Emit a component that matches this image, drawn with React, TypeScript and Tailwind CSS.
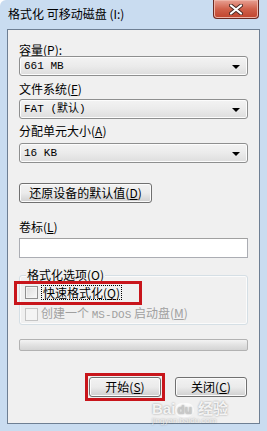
import React from 'react'

const cjk = { fontFamily: '"Noto Sans CJK SC", "Liberation Sans", sans-serif' }
const mono = { fontFamily: '"Liberation Mono", "Noto Sans CJK SC", monospace' }

function Key({ k }: { k: string }) {
  return (
    <span>
      (<span className="underline underline-offset-1">{k}</span>)
    </span>
  )
}

function Select({ value }: { value: React.ReactNode }) {
  return (
    <div className="h-[20px] flex items-center justify-between rounded-[3px] border border-[#8e8f8f] bg-gradient-to-b from-[#f3f3f3] via-[#ebebeb] to-[#dddddd] pl-[4px] pr-[7px] text-[11px] text-black shadow-[inset_0_0_0_1px_#fcfcfc]">
      <span style={mono}>{value}</span>
      <span className="w-0 h-0 border-l-[4px] border-r-[4px] border-t-[4px] border-l-transparent border-r-transparent border-t-black mt-[2px]" />
    </div>
  )
}

function Button({ children, className = '' }: { children: React.ReactNode; className?: string }) {
  return (
    <div
      className={`h-[20px] flex items-center justify-center rounded-[3px] border border-[#707070] bg-gradient-to-b from-[#f2f2f2] via-[#ebebeb] to-[#cfcfcf] text-[12px] text-black shadow-[inset_0_0_0_1px_#fbfbfb] ${className}`}
    >
      {children}
    </div>
  )
}

export default function App() {
  return (
    <div className="w-[267px] h-[431px] bg-[#c9dcf0] flex flex-col relative overflow-hidden rounded-tl-[6px]" style={cjk}>
      {/* title bar */}
      <div className="h-[29px] flex items-start justify-between shrink-0">
        <div className="pl-[8px] pt-[7px] text-[12px] leading-[14px] text-black">
          格式化 可移动磁盘 (I:)
        </div>
        <div className="mr-[8px] w-[46px] h-[19px] rounded-b-[4px] border border-t-0 border-[#6b2a22] bg-gradient-to-b from-[#e7a093] via-[#d0614b] to-[#c0432c] flex items-center justify-center shadow-[inset_0_0_0_1px_#eeb3a6]">
          <svg width="14" height="11" viewBox="0 0 14 11">
            <path d="M2 1.5 L12 9.5 M12 1.5 L2 9.5" stroke="#4a2a24" strokeWidth="4" strokeLinecap="round" />
            <path d="M2 1.5 L12 9.5 M12 1.5 L2 9.5" stroke="#ffffff" strokeWidth="2.2" strokeLinecap="round" />
          </svg>
        </div>
      </div>

      {/* client area */}
      <div className="mx-[7px] mb-[7px] flex-1 border border-[#6e7f93] bg-[#f0f0f0] px-[11px] text-[12px] leading-[14px] text-black flex flex-col">
        <div className="mt-[13px]">
          容量<Key k="P" />:
        </div>
        <div className="mt-[-1px]">
          <Select value="661 MB" />
        </div>

        <div className="mt-[6px]">
          文件系统<Key k="F" />
        </div>
        <div className="mt-[3px]">
          <Select value="FAT (默认)" />
        </div>

        <div className="mt-[5px]">
          分配单元大小<Key k="A" />
        </div>
        <div className="mt-[5px]">
          <Select value="16 KB" />
        </div>

        <Button className="mt-[20px] w-[133px] self-start">
          还原设备的默认值<Key k="D" />
        </Button>

        <div className="mt-[17px]">
          卷标<Key k="L" />
        </div>
        <div className="mt-[4px] h-[20px] border border-[#abadb3] border-t-[#a0a0a0] bg-white" />

        {/* group box */}
        <div className="mt-[17px] relative h-[50px] border border-[#d5dfe5] rounded-[3px] shadow-[inset_0_0_0_1px_#fbfbfb]">
          <div className="absolute left-[6px] top-[-8px] bg-[#f0f0f0] px-[1px]">
            格式化选项<Key k="O" />
          </div>
          <div className="mt-[9px] ml-[5px] flex items-center gap-[3px]">
            <span className="w-[13px] h-[13px] border border-[#8f8f8f] bg-gradient-to-br from-[#dcdcdc] to-[#f8f8f8] shadow-[inset_0_0_0_1px_#f4f4f4]" />
            <span className="border border-dotted border-black px-[1px] leading-[13px]">
              快速格式化<Key k="Q" />
            </span>
          </div>
          <div className="mt-[6px] ml-[5px] flex items-center gap-[3px] text-[#a0a0a0]">
            <span className="w-[13px] h-[13px] border border-[#c4c4c4] bg-[#f4f4f4]" />
            <span>
              创建一个 <span style={mono} className="text-[11px]">MS-DOS</span> 启动盘<Key k="M" />
            </span>
          </div>
          {/* red highlight */}
          <div className="absolute left-[-6px] top-[5px] w-[128px] h-[24px] border-[3px] border-[#c8151b]" />
        </div>

        <div className="mt-[14px] h-[12px] rounded-[2px] border border-[#b2b2b2] bg-gradient-to-b from-[#f3f3f3] via-[#e2e2e2] to-[#d4d4d4]" />

        <div className="mt-[26px] flex justify-end gap-[10px] pr-[1px]">
          <div className="border-[3px] border-[#c8151b] p-[1px] -my-[4px]">
            <Button className="w-[72px] h-[17px] border-[#3c7fb1] from-[#eaf6fd] via-[#bee6fd] to-[#a7d9f5] shadow-[inset_0_0_0_1px_#c6e9fc]">
              开始<Key k="S" />
            </Button>
          </div>
          <Button className="w-[72px] h-[19px]">
            关闭<Key k="C" />
          </Button>
        </div>
      </div>

      {/* watermark */}
      <div className="absolute left-[152px] top-[400px] text-white/85 leading-none [text-shadow:0_0_2px_rgba(0,0,0,0.4)] pointer-events-none">
        <div className="text-[15px] font-bold" style={{ fontFamily: '"Liberation Sans", "Noto Sans CJK SC", sans-serif' }}>
          Bai<span className="text-[12px] rounded-full bg-white/70 text-[#c9c9c9] px-[2px]">du</span>
          <span className="ml-[4px]" style={cjk}>经验</span>
        </div>
        <div className="mt-[1px] text-[8px] text-white/70" style={{ fontFamily: '"Liberation Sans", sans-serif' }}>
          jingyan.baidu.com
        </div>
      </div>
    </div>
  )
}
